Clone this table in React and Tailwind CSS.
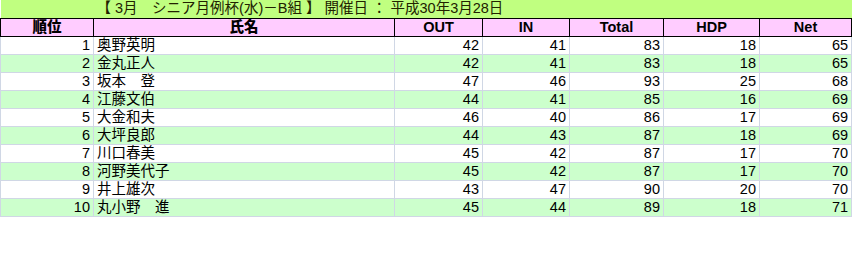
import React from "react";

const rows = [
  [1, "奥野英明", 42, 41, 83, 18, 65],
  [2, "金丸正人", 42, 41, 83, 18, 65],
  [3, "坂本　登", 47, 46, 93, 25, 68],
  [4, "江藤文伯", 44, 41, 85, 16, 69],
  [5, "大金和夫", 46, 40, 86, 17, 69],
  [6, "大坪良郎", 44, 43, 87, 18, 69],
  [7, "川口春美", 45, 42, 87, 17, 70],
  [8, "河野美代子", 45, 42, 87, 17, 70],
  [9, "井上雄次", 43, 47, 90, 20, 70],
  [10, "丸小野　進", 45, 44, 89, 18, 71],
];

const widths = [93, 301, 88, 87, 94, 96, 92];
const heads = ["順位", "氏名", "OUT", "IN", "Total", "HDP", "Net"];

function App() {
  return (
    <div
      className="w-[855px] h-[253px] bg-white text-[14.5px] text-black"
      style={{ fontFamily: '"Liberation Sans", "Noto Sans CJK JP", sans-serif' }}
    >
      <table className="table-fixed border-collapse w-[851px]">
        <colgroup>
          {widths.map((w, i) => (
            <col key={i} style={{ width: w }} />
          ))}
        </colgroup>
        <tbody>
          {/* title */}
          <tr className="h-[18px] bg-[#c0ff80]">
            <td className="p-0"></td>
            <td colSpan={6} className="p-0 pl-[3px] leading-[17px] whitespace-nowrap text-[#222200]">
              【 3月　シニア月例杯(水)－B組 】 開催日 ： 平成30年3月28日
            </td>
          </tr>
          {/* header */}
          <tr className="h-[18px] bg-[#ffccff]">
            {heads.map((h) => (
              <td
                key={h}
                className="p-0 border border-black text-center font-extrabold leading-[16px]"
              >
                {h}
              </td>
            ))}
          </tr>
          {rows.map((r, i) => (
            <tr
              key={r[0]}
              className={`h-[18px] ${i % 2 === 1 ? "bg-[#ccffcc]" : "bg-white"}`}
            >
              {r.map((v, j) => (
                <td
                  key={j}
                  className={`p-0 border border-[#d0d7e5] leading-[17px] ${
                    j === 1 ? "text-left pl-[3px]" : "text-right pr-[3px]"
                  }`}
                >
                  {v}
                </td>
              ))}
            </tr>
          ))}
        </tbody>
      </table>
    </div>
  );
}

export default App;
